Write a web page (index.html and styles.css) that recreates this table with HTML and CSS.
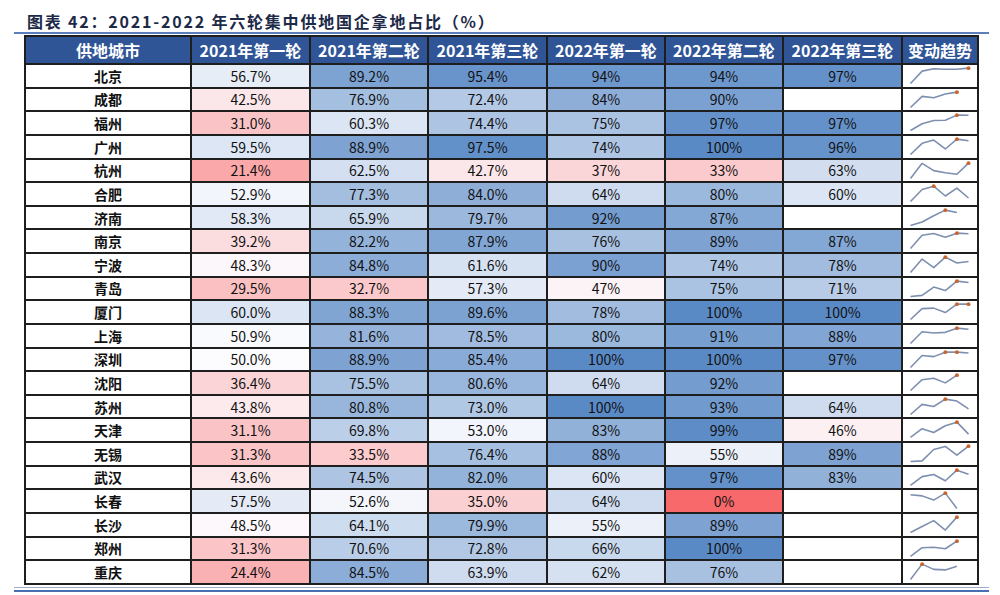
FILE: index.html
```html
<!DOCTYPE html>
<html lang="zh-CN">
<head>
<meta charset="utf-8">
<title>2021-2022 年六轮集中供地国企拿地占比</title>
<link rel="stylesheet" href="styles.css">
</head>
<body>
<div class="page">
  <h1 class="title">图表 42：2021-2022 年六轮集中供地国企拿地占比（%）</h1>
  <div class="rule"></div>
  <div class="grid">
    <div class="th">供地城市</div><div class="th">2021年第一轮</div><div class="th">2021年第二轮</div><div class="th">2021年第三轮</div><div class="th">2022年第一轮</div><div class="th">2022年第二轮</div><div class="th">2022年第三轮</div><div class="th">变动趋势</div>

    <div class="city">北京</div><div class="v">56.7%</div><div class="v">89.2%</div><div class="v">95.4%</div><div class="v">94%</div><div class="v">94%</div><div class="v">97%</div><div class="spark" data-v="56.7,89.2,95.4,94,94,97"></div>
    <div class="city">成都</div><div class="v">42.5%</div><div class="v">76.9%</div><div class="v">72.4%</div><div class="v">84%</div><div class="v">90%</div><div class="v"></div><div class="spark" data-v="42.5,76.9,72.4,84,90"></div>
    <div class="city">福州</div><div class="v">31.0%</div><div class="v">60.3%</div><div class="v">74.4%</div><div class="v">75%</div><div class="v">97%</div><div class="v">97%</div><div class="spark" data-v="31.0,60.3,74.4,75,97.2,96.8"></div>
    <div class="city">广州</div><div class="v">59.5%</div><div class="v">88.9%</div><div class="v">97.5%</div><div class="v">74%</div><div class="v">100%</div><div class="v">96%</div><div class="spark" data-v="59.5,88.9,97.5,74,100,96"></div>
    <div class="city">杭州</div><div class="v">21.4%</div><div class="v">62.5%</div><div class="v">42.7%</div><div class="v">37%</div><div class="v">33%</div><div class="v">63%</div><div class="spark" data-v="21.4,62.5,42.7,37,33,63"></div>
    <div class="city">合肥</div><div class="v">52.9%</div><div class="v">77.3%</div><div class="v">84.0%</div><div class="v">64%</div><div class="v">80%</div><div class="v">60%</div><div class="spark" data-v="52.9,77.3,84.0,64,80,60"></div>
    <div class="city">济南</div><div class="v">58.3%</div><div class="v">65.9%</div><div class="v">79.7%</div><div class="v">92%</div><div class="v">87%</div><div class="v"></div><div class="spark" data-v="58.3,65.9,79.7,92,87"></div>
    <div class="city">南京</div><div class="v">39.2%</div><div class="v">82.2%</div><div class="v">87.9%</div><div class="v">76%</div><div class="v">89%</div><div class="v">87%</div><div class="spark" data-v="39.2,82.2,87.9,76,89,87"></div>
    <div class="city">宁波</div><div class="v">48.3%</div><div class="v">84.8%</div><div class="v">61.6%</div><div class="v">90%</div><div class="v">74%</div><div class="v">78%</div><div class="spark" data-v="48.3,84.8,61.6,90,74,78"></div>
    <div class="city">青岛</div><div class="v">29.5%</div><div class="v">32.7%</div><div class="v">57.3%</div><div class="v">47%</div><div class="v">75%</div><div class="v">71%</div><div class="spark" data-v="29.5,32.7,57.3,47,75,71"></div>
    <div class="city">厦门</div><div class="v">60.0%</div><div class="v">88.3%</div><div class="v">89.6%</div><div class="v">78%</div><div class="v">100%</div><div class="v">100%</div><div class="spark" data-v="60.0,88.3,89.6,78,100,100"></div>
    <div class="city">上海</div><div class="v">50.9%</div><div class="v">81.6%</div><div class="v">78.5%</div><div class="v">80%</div><div class="v">91%</div><div class="v">88%</div><div class="spark" data-v="50.9,81.6,78.5,80,91,88"></div>
    <div class="city">深圳</div><div class="v">50.0%</div><div class="v">88.9%</div><div class="v">85.4%</div><div class="v">100%</div><div class="v">100%</div><div class="v">97%</div><div class="spark" data-v="50.0,88.9,85.4,100,100,97"></div>
    <div class="city">沈阳</div><div class="v">36.4%</div><div class="v">75.5%</div><div class="v">80.6%</div><div class="v">64%</div><div class="v">92%</div><div class="v"></div><div class="spark" data-v="36.4,75.5,80.6,64,92"></div>
    <div class="city">苏州</div><div class="v">43.8%</div><div class="v">80.8%</div><div class="v">73.0%</div><div class="v">100%</div><div class="v">93%</div><div class="v">64%</div><div class="spark" data-v="43.8,80.8,73.0,100,93,64"></div>
    <div class="city">天津</div><div class="v">31.1%</div><div class="v">69.8%</div><div class="v">53.0%</div><div class="v">83%</div><div class="v">99%</div><div class="v">46%</div><div class="spark" data-v="31.1,69.8,53.0,83,99,46"></div>
    <div class="city">无锡</div><div class="v">31.3%</div><div class="v">33.5%</div><div class="v">76.4%</div><div class="v">88%</div><div class="v">55%</div><div class="v">89%</div><div class="spark" data-v="31.3,33.5,76.4,88,55,89"></div>
    <div class="city">武汉</div><div class="v">43.6%</div><div class="v">74.5%</div><div class="v">82.0%</div><div class="v">60%</div><div class="v">97%</div><div class="v">83%</div><div class="spark" data-v="43.6,74.5,82.0,60,97,83"></div>
    <div class="city">长春</div><div class="v">57.5%</div><div class="v">52.6%</div><div class="v">35.0%</div><div class="v">64%</div><div class="v">0%</div><div class="v"></div><div class="spark" data-v="57.5,52.6,35.0,64,0"></div>
    <div class="city">长沙</div><div class="v">48.5%</div><div class="v">64.1%</div><div class="v">79.9%</div><div class="v">55%</div><div class="v">89%</div><div class="v"></div><div class="spark" data-v="48.5,64.1,79.9,55,89"></div>
    <div class="city">郑州</div><div class="v">31.3%</div><div class="v">70.6%</div><div class="v">72.8%</div><div class="v">66%</div><div class="v">100%</div><div class="v"></div><div class="spark" data-v="31.3,70.6,72.8,66,100"></div>
    <div class="city">重庆</div><div class="v">24.4%</div><div class="v">84.5%</div><div class="v">63.9%</div><div class="v">62%</div><div class="v">76%</div><div class="v"></div><div class="spark" data-v="24.4,84.5,63.9,62,76"></div>
  </div>
  <div class="footer"></div>
</div>
<script src="script.js"></script>
</body>
</html>
```

FILE: styles.css
```css
html, body {
  margin: 0;
  padding: 0;
  background: #ffffff;
}

.page {
  width: 1000px;
  height: 595px;
  overflow: hidden;
  font-family: "Noto Sans CJK SC", "Noto Sans", sans-serif;
  color: #111111;
}

.title {
  margin: 0;
  padding: 10px 0 0 27px;
  height: 22px;
  line-height: 22px;
  font-size: 16px;
  font-weight: 700;
  letter-spacing: 1.8px;
  color: #1c2a48;
  white-space: nowrap;
}

.rule {
  margin-left: 14px;
  width: 975px;
  height: 2px;
  background: #5b7fbd;
  margin-bottom: 1px;
}

.grid {
  margin-left: 24px;
  width: 951px;
  display: grid;
  grid-template-columns: 164px 117px 116px 117px 116px 116px 117px 74px;
  grid-template-rows: 26px;
  grid-auto-rows: 21.64px;
  gap: 2px;
  padding: 2px;
  background: #1e1e1e;
}

.th {
  background: #2f5597;
  color: #ffffff;
  font-size: 16px;
  font-weight: 700;
  display: flex;
  align-items: center;
  justify-content: center;
  white-space: nowrap;
}

.city {
  background: #ffffff;
  font-size: 14px;
  font-weight: 700;
  display: flex;
  align-items: center;
  justify-content: center;
}

.v {
  background: #ffffff;
  font-size: 14px;
  display: flex;
  align-items: center;
  justify-content: center;
}

.spark {
  background: #ffffff;
}

.spark svg {
  display: block;
  width: 100%;
  height: 100%;
}

.footer {
  margin-top: 2px;
  margin-left: 14px;
  width: 975px;
  height: 2px;
  border-top: 1px solid #9fadc9;
  border-bottom: 2px solid #4a70b4;
}
```

FILE: script.js
```javascript
(function () {
  var WHITE = [252, 252, 255];
  var RED = [248, 105, 107];
  var BLUE = [90, 138, 198];

  function mix(a, b, t) {
    return a.map(function (v, i) { return Math.round(v + (b[i] - v) * t); });
  }

  document.querySelectorAll('.v').forEach(function (cell) {
    var v = parseFloat(cell.textContent);
    if (isNaN(v)) return;
    var c = v < 50 ? mix(WHITE, RED, (50 - v) / 50) : mix(WHITE, BLUE, (v - 50) / 50);
    cell.style.background = 'rgb(' + c.join(',') + ')';
  });

  var NS = 'http://www.w3.org/2000/svg';
  document.querySelectorAll('.spark').forEach(function (cell) {
    var vals = cell.getAttribute('data-v').split(',').map(Number);
    var w = cell.clientWidth, h = cell.clientHeight;
    var max = Math.max.apply(null, vals), min = Math.min.apply(null, vals);
    var x0 = 7, step = 11.8, top = 3.2, span = h - 6.4;
    var pts = vals.map(function (v, i) {
      return [x0 + i * step, top + (max - v) / (max - min) * span];
    });
    var svg = document.createElementNS(NS, 'svg');
    svg.setAttribute('viewBox', '0 0 ' + w + ' ' + h);
    var pl = document.createElementNS(NS, 'polyline');
    pl.setAttribute('points', pts.map(function (p) { return p[0].toFixed(2) + ',' + p[1].toFixed(2); }).join(' '));
    pl.setAttribute('fill', 'none');
    pl.setAttribute('stroke', '#7d8fb0');
    pl.setAttribute('stroke-width', '1.6');
    pl.setAttribute('stroke-linejoin', 'round');
    svg.appendChild(pl);
    vals.forEach(function (v, i) {
      if (v === max) {
        var c = document.createElementNS(NS, 'circle');
        c.setAttribute('cx', pts[i][0].toFixed(2));
        c.setAttribute('cy', pts[i][1].toFixed(2));
        c.setAttribute('r', '2');
        c.setAttribute('fill', '#c8642c');
        svg.appendChild(c);
      }
    });
    cell.appendChild(svg);
  });
})();
```
